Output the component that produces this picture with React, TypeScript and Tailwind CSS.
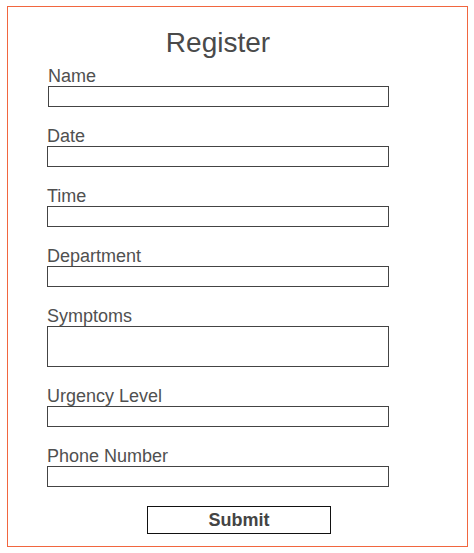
import React from 'react';

const fields = [
  { label: 'Date', tall: false },
  { label: 'Time', tall: false },
  { label: 'Department', tall: false },
  { label: 'Symptoms', tall: true },
  { label: 'Urgency Level', tall: false },
  { label: 'Phone Number', tall: false },
];

export default function App() {
  return (
    <div
      className="w-[474px] h-[553px] bg-white pt-[6px] pl-[7px] text-[#505050]"
      style={{ fontFamily: '"Liberation Sans", Arial, sans-serif' }}
    >
      <div className="w-[461px] h-[541px] border border-[#f1663f] pl-[39px] pt-[20px]">
        <div className="w-[342px] flex flex-col">
          <h1 className="text-[28px] leading-[32px] text-center font-normal text-[#4a4a4a]">Register</h1>

          {/* Name sits a pixel off from the rest */}
          <div className="mt-[6px] pl-px flex flex-col">
            <label className="text-[18px] leading-[23px] h-[21px]">Name</label>
            <input className="w-[341px] h-[21px] border border-[#444] outline-none" />
          </div>

          {fields.map((f) => (
            <div key={f.label} className="mt-[17px] flex flex-col">
              <label className="text-[18px] leading-[24px] h-[22px]">{f.label}</label>
              {f.tall ? (
                <textarea className="w-[342px] h-[41px] border border-[#444] outline-none resize-none" />
              ) : (
                <input className="w-[342px] h-[21px] border border-[#444] outline-none" />
              )}
            </div>
          ))}

          <button className="mt-[19px] ml-[100px] w-[184px] h-[28px] border border-[#111] text-[18px] font-bold text-[#444] leading-none flex items-center justify-center">
            Submit
          </button>
        </div>
      </div>
    </div>
  );
}
